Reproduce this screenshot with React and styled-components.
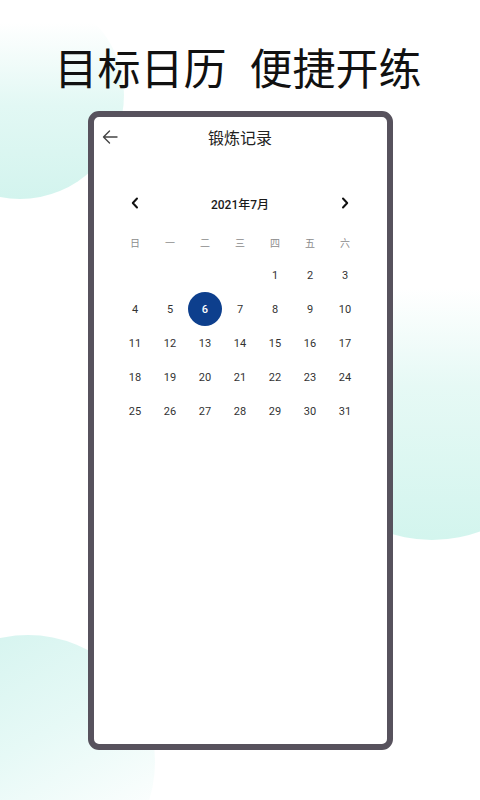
import React from 'react';
import styled, { createGlobalStyle } from 'styled-components';

const GlobalStyle = createGlobalStyle`
  html, body {
    margin: 0;
    padding: 0;
    background: #ffffff;
  }
  body {
    font-family: Roboto, "Noto Sans CJK SC", "Noto Sans", sans-serif;
  }
`;

const StyledPage = styled.div`
  position: relative;
  width: 480px;
  height: 800px;
  overflow: hidden;
  background: #ffffff;
`;

const Blob = styled.div`
  position: absolute;
  left: ${(p) => p.x - p.r}px;
  top: ${(p) => p.y - p.r}px;
  width: ${(p) => p.r * 2}px;
  height: ${(p) => p.r * 2}px;
  border-radius: 50%;
  background: ${(p) => p.bg};
  z-index: 0;
`;

const StyledHeadline = styled.h1`
  position: relative;
  z-index: 1;
  margin: 0;
  padding-top: 45px;
  padding-right: 4px;
  display: flex;
  justify-content: center;
  gap: 23px;
  font-family: "Noto Sans CJK SC", sans-serif;
  font-size: 43px;
  line-height: 43px;
  font-weight: 400;
  color: #111111;
`;

const StyledFrame = styled.div`
  position: relative;
  z-index: 1;
  box-sizing: border-box;
  width: 305px;
  height: 639px;
  margin: 23px auto 0;
  border: 6px solid #57525d;
  border-radius: 11px;
  background: #ffffff;
`;

const StyledTopBar = styled.div`
  position: relative;
  height: 40px;
  display: flex;
  align-items: center;
  justify-content: center;
`;

const BackButton = styled.div`
  position: absolute;
  left: 8px;
  top: 11px;
  width: 18px;
  height: 18px;
  display: flex;
  align-items: center;
`;

const StyledTitle = styled.div`
  font-family: "Noto Sans CJK SC", sans-serif;
  font-size: 16px;
  color: #222222;
`;

const StyledCalendar = styled.div`
  width: 245px;
  margin: 34px auto 0;
`;

const MonthRow = styled.div`
  display: grid;
  grid-template-columns: 35px 1fr 35px;
  height: 24px;
  align-items: center;
  margin-bottom: 11px;
`;

const Chevron = styled.div`
  display: flex;
  justify-content: center;
  align-items: center;
`;

const MonthLabel = styled.div`
  text-align: center;
  font-family: Roboto, "Noto Sans CJK SC", sans-serif;
  font-size: 12px;
  font-weight: 500;
  color: #1a1a1a;
`;

const Week = styled.div`
  display: grid;
  grid-template-columns: repeat(7, 35px);
  height: ${(p) => (p.head ? 32 : 34)}px;
  align-items: center;
`;

const WeekDay = styled.div`
  text-align: center;
  font-family: "Noto Sans CJK SC", sans-serif;
  font-size: 10px;
  color: #8c8c8c;
`;

const Day = styled.div`
  justify-self: center;
  width: 34px;
  height: 34px;
  border-radius: 50%;
  display: flex;
  align-items: center;
  justify-content: center;
  font-family: Roboto, sans-serif;
  font-size: 11px;
  font-weight: ${(p) => (p.active ? 500 : 400)};
  color: ${(p) => (p.active ? '#ffffff' : '#333333')};
  background: ${(p) => (p.active ? '#0d3f8d' : 'transparent')};
`;

const weekDays = ['日', '一', '二', '三', '四', '五', '六'];

const buildWeeks = () => {
  const cells = [null, null, null, null];
  for (let d = 1; d <= 31; d += 1) cells.push(d);
  const weeks = [];
  for (let i = 0; i < cells.length; i += 7) weeks.push(cells.slice(i, i + 7));
  return weeks;
};

const App = () => {
  const weeks = buildWeeks();
  return (
    <StyledPage>
      <GlobalStyle />
      <Blob x={20} y={95} r={104} bg="linear-gradient(to bottom, rgba(230,250,246,0) 15%, #e2f8f4 55%, #d3f4ee 100%)" />
      <Blob x={432} y={400} r={140} bg="linear-gradient(to bottom, rgba(230,250,246,0) 10%, #e6f9f5 45%, #d3f5ee 100%)" />
      <Blob x={28} y={762} r={127} bg="linear-gradient(150deg, #d5f4ef 10%, #e6f9f6 45%, rgba(240,252,250,0) 85%)" />

      <StyledHeadline>
        <span>目标日历</span>
        <span>便捷开练</span>
      </StyledHeadline>

      <StyledFrame>
        <StyledTopBar>
          <BackButton>
            <svg width="16" height="16" viewBox="0 0 16 16" fill="none" stroke="#444" strokeWidth="1.4" strokeLinecap="round" strokeLinejoin="round">
              <path d="M15 8H1.5M7.5 2L1.5 8l6 6" />
            </svg>
          </BackButton>
          <StyledTitle>锻炼记录</StyledTitle>
        </StyledTopBar>

        <StyledCalendar>
          <MonthRow>
            <Chevron>
              <svg width="8" height="12" viewBox="0 0 8 12" fill="none" stroke="#111" strokeWidth="2" strokeLinecap="round" strokeLinejoin="round">
                <path d="M6 1.5L1.8 6 6 10.5" />
              </svg>
            </Chevron>
            <MonthLabel>2021年7月</MonthLabel>
            <Chevron>
              <svg width="8" height="12" viewBox="0 0 8 12" fill="none" stroke="#111" strokeWidth="2" strokeLinecap="round" strokeLinejoin="round">
                <path d="M2 1.5L6.2 6 2 10.5" />
              </svg>
            </Chevron>
          </MonthRow>

          <Week head>
            {weekDays.map((w) => (
              <WeekDay key={w}>{w}</WeekDay>
            ))}
          </Week>

          {weeks.map((week, i) => (
            <Week key={i}>
              {week.map((d, j) => (
                <Day key={j} active={d === 6}>{d || ''}</Day>
              ))}
            </Week>
          ))}
        </StyledCalendar>
      </StyledFrame>
    </StyledPage>
  );
};

export default App;
